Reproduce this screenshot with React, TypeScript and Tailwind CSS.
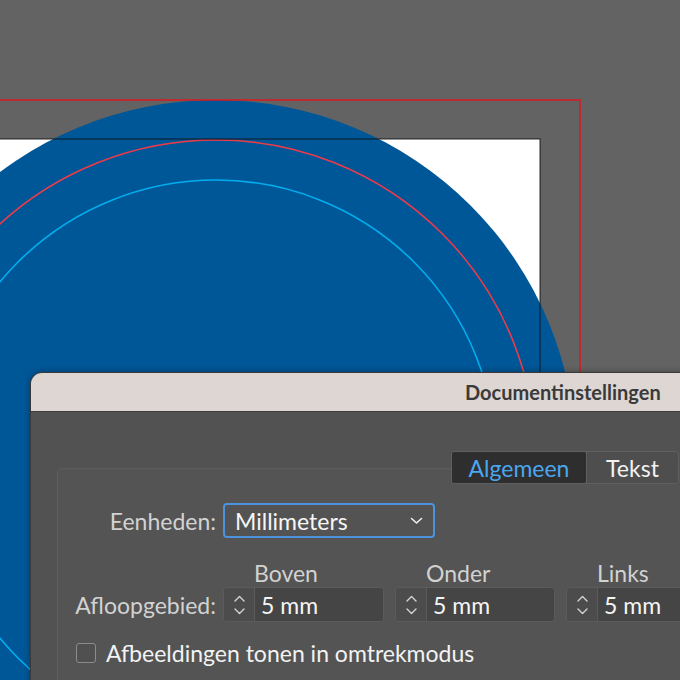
import React from "react";

const Chev = ({ up, className }: { up?: boolean; className?: string }) => (
  <svg width="11" height="7" viewBox="0 0 11 7" className={className}>
    <path
      d={up ? "M1 6 L5.5 1.5 L10 6" : "M1 1 L5.5 5.5 L10 1"}
      fill="none"
      stroke="#d4d4d4"
      strokeWidth="1.4"
      strokeLinecap="round"
      strokeLinejoin="round"
    />
  </svg>
);

const Spin = ({ w }: { w: string }) => (
  <div className={`flex h-[35px] ${w} shrink-0 rounded-[4px] border border-[#5b5b5b] overflow-hidden`}>
    <div className="flex w-[31px] flex-col items-center justify-center gap-[6px] border-r border-[#5b5b5b] bg-[#4c4c4c]">
      <Chev up />
      <Chev />
    </div>
    <div className="flex flex-1 items-center bg-[#454545] pl-[6px] text-[23px] leading-[26px] text-[#f4f4f4]">5 mm</div>
  </div>
);

export default function App() {
  return (
    <div
      className="relative h-[680px] w-[680px] overflow-hidden bg-[#636363]"
      style={{ fontFamily: "Lato, 'Noto Sans', sans-serif" }}
    >
      <svg className="absolute inset-0" width="680" height="680" viewBox="0 0 680 680">
        <rect x="-20" y="139" width="560" height="600" fill="#ffffff" />
        <circle cx="216" cy="460" r="360" fill="#005797" />
        <circle cx="216" cy="460" r="320" fill="none" stroke="#ef3a4a" strokeWidth="1.6" />
        <circle cx="216" cy="460" r="280" fill="none" stroke="#00aeef" strokeWidth="1.6" />
        <rect x="-20" y="139" width="560" height="600" fill="none" stroke="#111111" strokeOpacity="0.75" strokeWidth="1.2" />
        <rect x="-20" y="100" width="600" height="640" fill="none" stroke="#e3151b" strokeWidth="1.4" />
      </svg>

      <div className="absolute left-[30px] top-[372px] h-[330px] w-[680px] overflow-hidden rounded-tl-[12px] border border-[#3a3a3a] bg-[#525252] shadow-[0_0_6px_rgba(0,0,0,0.35)]">
        <div className="flex h-[39px] items-center border-b border-[#3d3d3d] bg-[#ddd6d3] pl-[434px]">
          <span className="text-[20px] font-bold leading-[24px] text-[#3a3a3a]">Documentinstellingen</span>
        </div>

        <div className="pt-[39px]">
          <div className="relative z-10 ml-[420px] flex h-[33px] w-[228px] rounded-[3px] border border-[#5f5f5f] bg-[#4e4e4e]">
            <div className="flex w-[134px] items-center justify-center rounded-[2px] bg-[#2e2e2e] text-[23px] leading-[26px] text-[#4ba6ee]">
              Algemeen
            </div>
            <div className="w-px bg-[#5f5f5f]" />
            <div className="flex flex-1 items-center justify-center text-[23px] leading-[26px] text-[#f2f2f2]">Tekst</div>
          </div>

          <div className="-mt-[16px] ml-[26px] h-[300px] w-[700px] rounded-[5px] border border-[#5e5e5e] bg-[#545454]">
            <div className="flex items-center gap-[7px] pt-[34px]">
              <div className="w-[158px] text-right text-[23px] leading-[26px] text-[#d2d2d2]">Eenheden:</div>
              <div className="flex h-[35px] w-[212px] items-center justify-between rounded-[4px] border-2 border-[#4b93de] bg-[#535353] pl-[10px] pr-[10px]">
                <span className="text-[23px] leading-[26px] text-[#f6f6f6]">Millimeters</span>
                <svg width="13" height="8" viewBox="0 0 13 8">
                  <path d="M1.5 1.5 L6.5 6 L11.5 1.5" fill="none" stroke="#f0f0f0" strokeWidth="1.6" strokeLinecap="round" strokeLinejoin="round" />
                </svg>
              </div>
            </div>

            <div className="mt-[22px] flex gap-[11px] pl-[165px] text-[23px] leading-[26px] text-[#d2d2d2]">
              <div className="w-[161px] pl-[31px]">Boven</div>
              <div className="w-[160px] pl-[31px]">Onder</div>
              <div className="w-[160px] pl-[31px]">Links</div>
            </div>

            <div className="mt-[1px] flex items-center gap-[7px]">
              <div className="w-[158px] text-right text-[23px] leading-[26px] text-[#d2d2d2]">Afloopgebied:</div>
              <div className="flex gap-[11px]">
                <Spin w="w-[161px]" />
                <Spin w="w-[160px]" />
                <Spin w="w-[160px]" />
              </div>
            </div>

            <div className="mt-[19px] flex items-center gap-[10px] pl-[18px]">
              <div className="h-[20px] w-[20px] rounded-[3px] border-[1.5px] border-[#8c8c8c] bg-[#505050]" />
              <span className="text-[23px] leading-[24px] text-[#f2f2f2]">Afbeeldingen tonen in omtrekmodus</span>
            </div>
          </div>
        </div>
      </div>
    </div>
  );
}
